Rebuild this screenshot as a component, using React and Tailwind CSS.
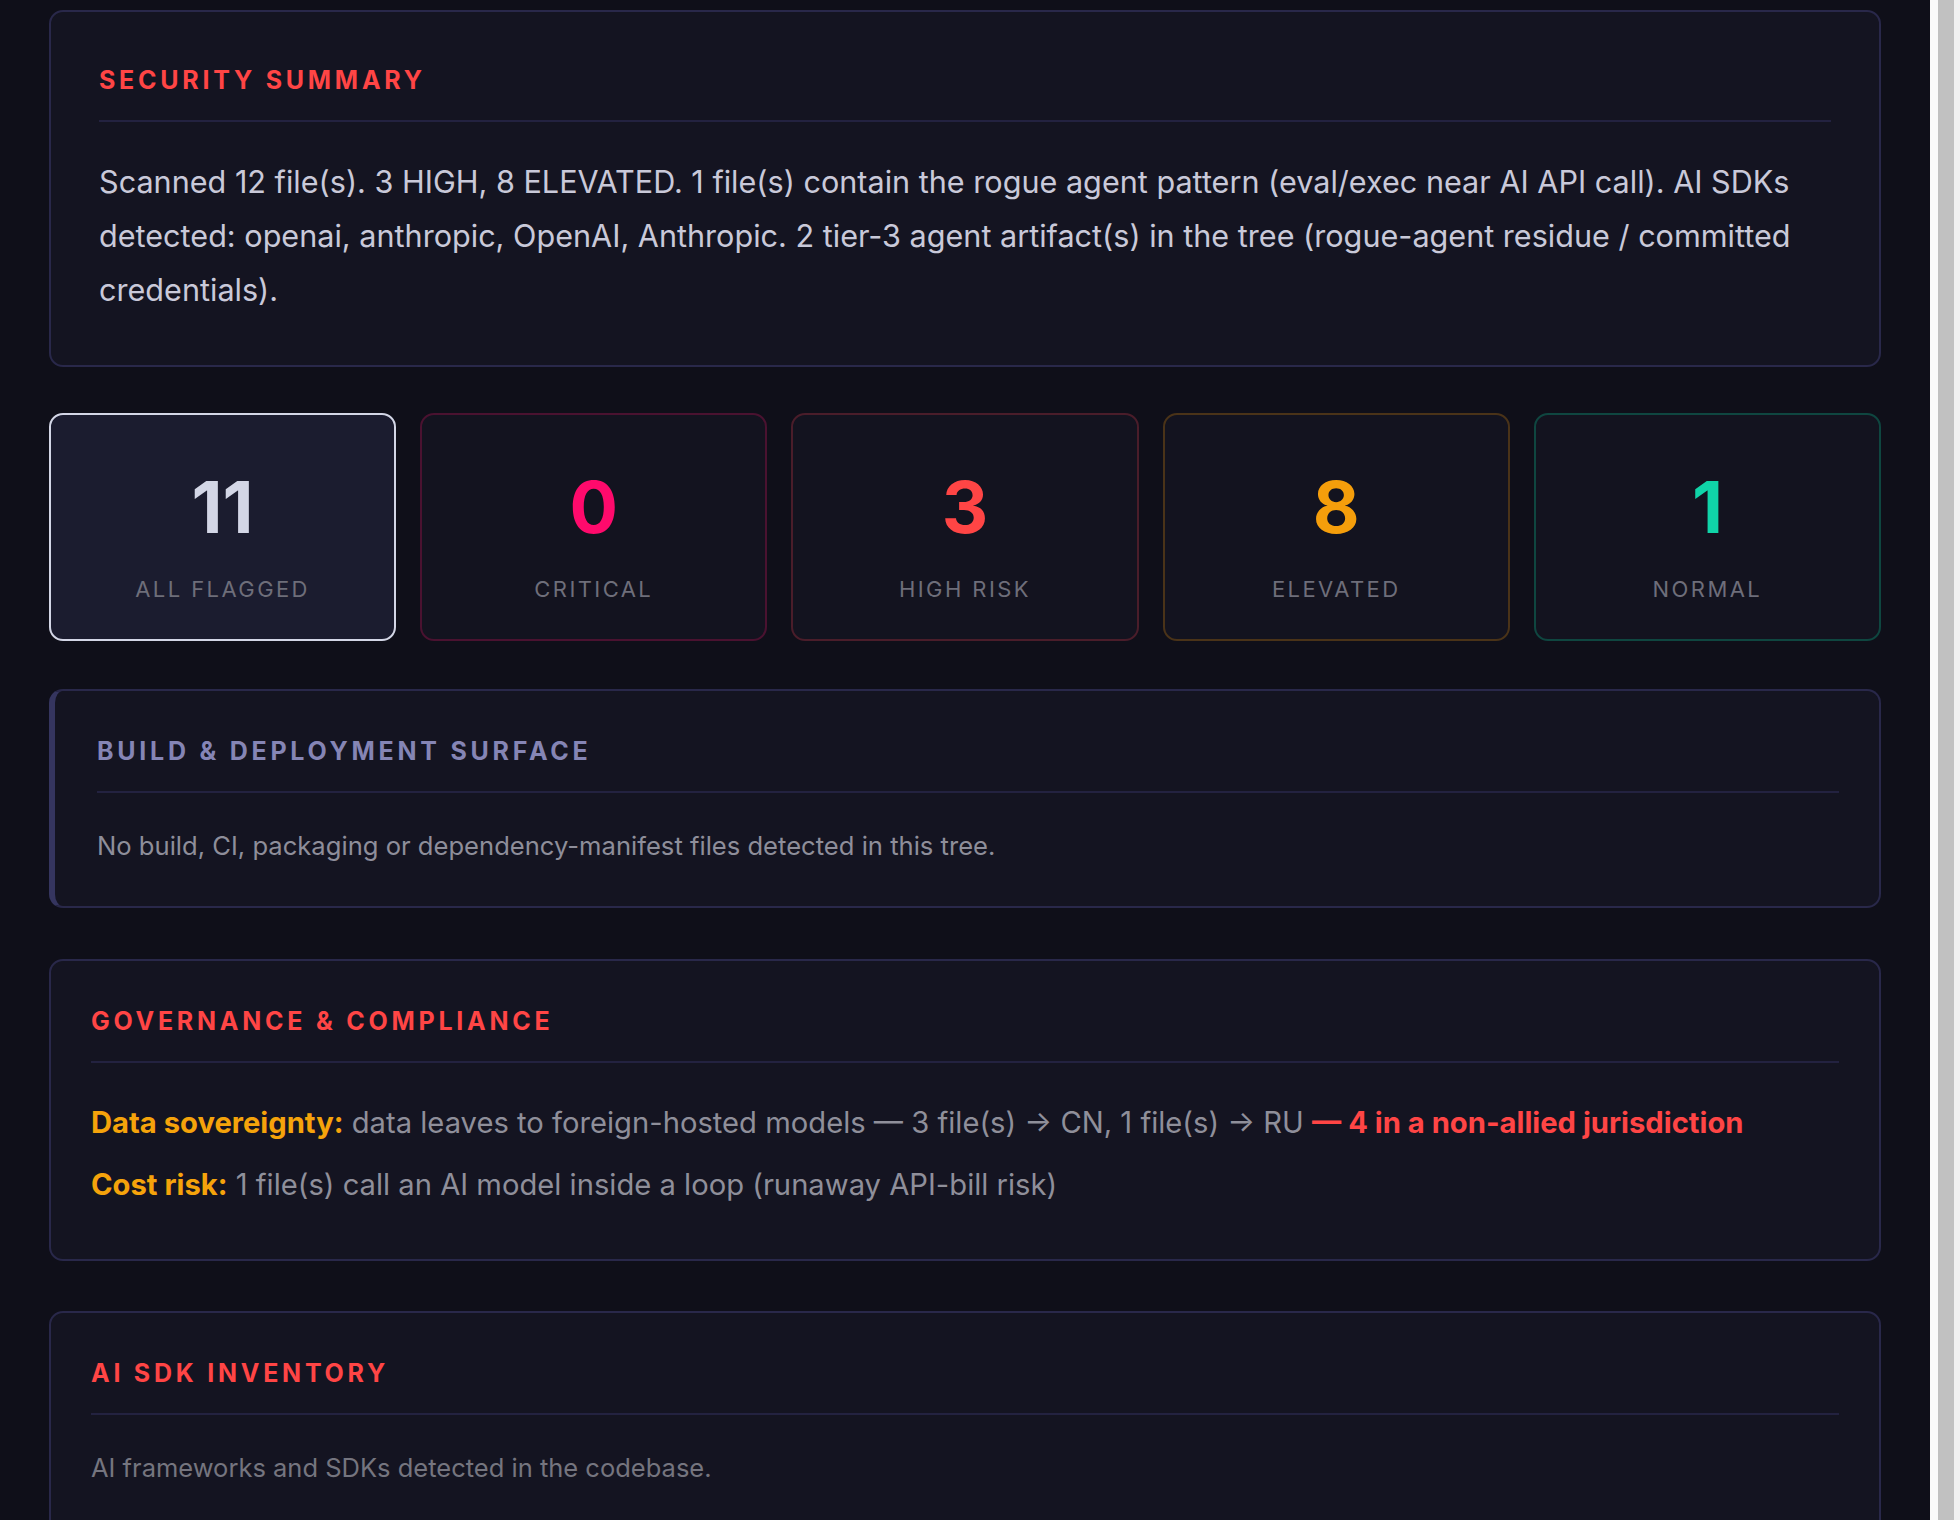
const stats = [
  { value: "11", label: "ALL FLAGGED", num: "text-[#d3d6e6]", box: "border-[#d3d6e6] bg-[#1b1c2f]" },
  { value: "0", label: "CRITICAL", num: "text-[#ff0a6c]", box: "border-[#4a1230] bg-[#13131f]" },
  { value: "3", label: "HIGH RISK", num: "text-[#ff4545]", box: "border-[#4a1d2a] bg-[#13131f]" },
  { value: "8", label: "ELEVATED", num: "text-[#f59e0b]", box: "border-[#4a3318] bg-[#13131f]" },
  { value: "1", label: "NORMAL", num: "text-[#10d4a8]", box: "border-[#0f4640] bg-[#13131f]" },
];

function SectionTitle({ children, color = "text-[#ff4545]" }) {
  return (
    <div className="pb-5 border-b-2 border-[#232240]">
      <h2 className={`text-[25px] leading-[40px] font-bold tracking-[0.15em] ${color}`}>{children}</h2>
    </div>
  );
}

function StatCard({ value, label, num, box }) {
  return (
    <div className={`h-[228px] rounded-[14px] border-2 ${box} flex flex-col items-center pt-[56px]`}>
      <div className={`text-[72px] leading-none font-bold ${num}`}>{value}</div>
      <div className="mt-[30px] text-[22px] leading-[32px] tracking-[0.11em] text-[#6e6e7a]">{label}</div>
    </div>
  );
}

export default function App() {
  return (
    <div
      className="w-[1960px] h-[1520px] overflow-hidden flex bg-[#0f0f19]"
      style={{ fontFamily: "Inter, 'Noto Sans', sans-serif" }}
    >
      <main className="flex-1 px-[49px] pt-[10px]">
        {/* security summary */}
        <section className="rounded-[14px] border-2 border-[#29284a] bg-[#141421] p-[48px]">
          <SectionTitle>SECURITY SUMMARY</SectionTitle>
          <p className="mt-[33px] text-[30.6px] leading-[54px] text-[#c9c9d9]">
            Scanned 12 file(s). 3 HIGH, 8 ELEVATED. 1 file(s) contain the rogue agent pattern (eval/exec near AI API call). AI SDKs detected: openai, anthropic, OpenAI, Anthropic. 2 tier-3 agent artifact(s) in the tree (rogue-agent residue / committed credentials).
          </p>
        </section>

        <div className="mt-[46px] grid grid-cols-5 gap-[24px]">
          {stats.map((s) => (
            <StatCard key={s.label} {...s} />
          ))}
        </div>

        <section className="mt-[48px] rounded-[14px] border-2 border-l-[6px] border-[#29284a] border-l-[#35355f] bg-[#141421] py-[40px] pl-[42px] pr-[40px]">
          <SectionTitle color="text-[#8585b5]">BUILD &amp; DEPLOYMENT SURFACE</SectionTitle>
          <p className="mt-[33px] text-[25.6px] leading-[40px] text-[#8e8e9a]">
            No build, CI, packaging or dependency-manifest files detected in this tree.
          </p>
        </section>

        <section className="mt-[51px] rounded-[14px] border-2 border-[#29284a] bg-[#141421] p-[40px]">
          <SectionTitle>GOVERNANCE &amp; COMPLIANCE</SectionTitle>
          <div className="mt-[38px] pb-[12px] flex flex-col gap-[18px] text-[29.2px] leading-[44px] text-[#8f8f9a]">
            <p>
              <span className="font-bold text-[#f5a30b]">Data sovereignty:</span> data leaves to foreign-hosted models — 3 file(s) → CN, 1 file(s) → RU{" "}
              <span className="font-bold text-[#ff4545]">— 4 in a non-allied jurisdiction</span>
            </p>
            <p>
              <span className="font-bold text-[#f5a30b]">Cost risk:</span> 1 file(s) call an AI model inside a loop (runaway API-bill risk)
            </p>
          </div>
        </section>

        <section className="mt-[50px] rounded-[14px] border-2 border-[#29284a] bg-[#141421] p-[40px] h-[400px]">
          <SectionTitle>AI SDK INVENTORY</SectionTitle>
          <p className="mt-[33px] text-[25.5px] leading-[40px] text-[#75757f]">
            AI frameworks and SDKs detected in the codebase.
          </p>
        </section>
      </main>

      {/* scrollbar */}
      <div className="w-[30px] h-full flex bg-[#f1f1f1]">
        <div className="w-[8px] bg-[#fafafa]" />
        <div className="w-[16px] bg-[#c1c1c1]" />
      </div>
    </div>
  );
}
